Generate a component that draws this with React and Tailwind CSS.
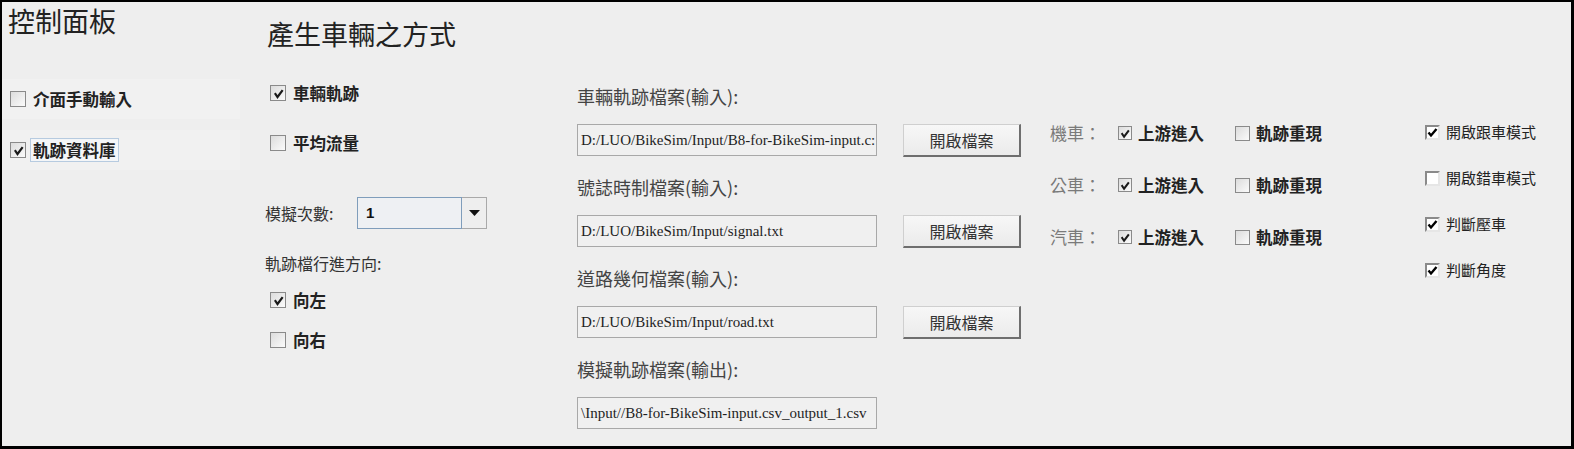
import React from "react";

const CJK = "font-['Noto_Sans_CJK_TC','Noto_Sans_CJK_SC',sans-serif]";

function CheckA({ checked, size = "w-[15px] h-[15px]" }) {
  return (
    <span className={"inline-flex shrink-0 items-center justify-center border border-[#8a8a8a] bg-gradient-to-br from-[#dcdcdc] to-[#fbfbfb] " + size}>
      {checked && (
        <svg width="13" height="13" viewBox="0 0 13 13">
          <path d="M3.5 7 L5.5 10 L10 4" fill="none" stroke="#1a1a1a" strokeWidth="2.2" strokeLinecap="square" />
        </svg>
      )}
    </span>
  );
}

function CheckB({ checked }) {
  return (
    <span className="inline-flex w-[15px] h-[15px] shrink-0 items-center justify-center border-2 border-t-[#8a8a8a] border-l-[#8a8a8a] border-r-[#e6e6e6] border-b-[#e6e6e6] bg-white">
      {checked && (
        <svg width="11" height="11" viewBox="0 0 11 11">
          <path d="M1.5 5.5 L4 8.5 L9.5 2" fill="none" stroke="#000" strokeWidth="2.4" />
        </svg>
      )}
    </span>
  );
}

function BoldItem({ checked, label, focus }) {
  return (
    <div className="flex items-center h-[24px]">
      <CheckA checked={checked} size="w-[16px] h-[16px]" />
      <span
        className={
          "ml-[4px] text-[16.5px] font-bold text-[#222] leading-[22px] px-[2px] " +
          (focus ? "border border-[#b7cbe0] bg-[#f4f6f8]" : "border border-transparent")
        }
      >
        {label}
      </span>
    </div>
  );
}

function FileSection({ label, value, button, first }) {
  return (
    <div className={first ? "flex flex-col" : "flex flex-col mt-[19px]"}>
      <div className="h-[24px] leading-[24px] text-[18px] text-[#444]">{label}</div>
      <div className="flex items-center mt-[16px] h-[32px]">
        <div className="w-[300px] h-[32px] border border-[#a8a8a8] bg-[#f0f0f0] flex items-center pl-[3px] overflow-hidden whitespace-nowrap font-['Liberation_Serif',serif] text-[15px] text-[#1e1e1e]">
          {value}
        </div>
        {button && (
          <div className="ml-[26px] w-[118px] h-[33px] flex items-center justify-center bg-gradient-to-b from-[#f7f7f7] to-[#ebebeb] border border-[#cfcfcf] border-r-2 border-b-2 border-r-[#6e6e6e] border-b-[#6e6e6e] text-[16px] text-[#333]">
            開啟檔案
          </div>
        )}
      </div>
    </div>
  );
}

function VehicleRow({ name, first }) {
  return (
    <div className={"flex items-center h-[28px] " + (first ? "" : "mt-[24px]")}>
      <span className="w-[68px] text-[17px] text-[#7a7a7a]">{name}：</span>
      <div className="w-[117px] flex items-center">
        <CheckA checked size="w-[14px] h-[14px]" />
        <span className="ml-[6px] text-[16.5px] font-bold text-[#222]">上游進入</span>
      </div>
      <div className="flex items-center">
        <CheckA checked={false} size="w-[15px] h-[15px]" />
        <span className="ml-[6px] text-[16.5px] font-bold text-[#222]">軌跡重現</span>
      </div>
    </div>
  );
}

function ModeRow({ checked, label, first }) {
  return (
    <div className={"flex items-center h-[24px] " + (first ? "" : "mt-[22px]")}>
      <CheckB checked={checked} />
      <span className="ml-[6px] text-[15px] text-[#222]">{label}</span>
    </div>
  );
}

export default function App() {
  return (
    <div className={"w-[1574px] h-[449px] bg-[#eeeeee] border-solid border-black border-t-2 border-l-2 border-r-[3px] border-b-[3px] flex " + CJK}>
      {/* Left control panel */}
      <div className="w-[238px] h-full flex flex-col">
        <div className="h-[38px] leading-[38px] text-[27px] text-[#222] pl-[6px]">控制面板</div>
        <div className="mt-[39px] h-[40px] flex items-center pl-[8px] bg-[#f1f1f1]">
          <BoldItem checked={false} label="介面手動輸入" />
        </div>
        <div className="mt-[11px] h-[40px] flex items-center pl-[8px] bg-[#f1f1f1]">
          <BoldItem checked label="軌跡資料庫" focus />
        </div>
      </div>

      {/* Vehicle generation */}
      <div className="w-[310px] h-full flex flex-col">
        <div className="mt-[13px] h-[38px] leading-[38px] text-[27px] text-[#222] pl-[27px]">產生車輛之方式</div>
        <div className="mt-[28px] pl-[30px]">
          <BoldItem checked label="車輛軌跡" />
        </div>
        <div className="mt-[26px] pl-[30px]">
          <BoldItem checked={false} label="平均流量" />
        </div>
        <div className="mt-[42px] pl-[25px] flex items-center h-[32px]">
          <span className="w-[92px] text-[16px] text-[#333]">模擬次數:</span>
          <div className="flex h-[32px] w-[130px]">
            <div className="flex-1 border border-[#7f9dbb] bg-[#eef0f3] flex items-center pl-[8px] font-['Liberation_Sans',sans-serif] font-bold text-[15px] text-[#111]">
              1
            </div>
            <div className="w-[25px] border border-l-0 border-[#a9a9a9] bg-[#eeeeee] flex items-center justify-center">
              <svg width="11" height="6" viewBox="0 0 11 6">
                <path d="M0 0 L11 0 L5.5 6 Z" fill="#111" />
              </svg>
            </div>
          </div>
        </div>
        <div className="mt-[22px] pl-[25px] h-[24px] leading-[24px] text-[16px] text-[#333]">軌跡檔行進方向:</div>
        <div className="mt-[13px] pl-[30px]">
          <BoldItem checked label="向左" />
        </div>
        <div className="mt-[16px] pl-[30px]">
          <BoldItem checked={false} label="向右" />
        </div>
      </div>

      {/* Files */}
      <div className="w-[480px] h-full flex flex-col pl-[27px] pt-[82px]">
        <FileSection first label="車輛軌跡檔案(輸入):" value="D:/LUO/BikeSim/Input/B8-for-BikeSim-input.c:" button />
        <FileSection label="號誌時制檔案(輸入):" value="D:/LUO/BikeSim/Input/signal.txt" button />
        <FileSection label="道路幾何檔案(輸入):" value="D:/LUO/BikeSim/Input/road.txt" button />
        <FileSection label="模擬軌跡檔案(輸出):" value="\Input//B8-for-BikeSim-input.csv_output_1.csv" />
      </div>

      {/* Vehicle types */}
      <div className="w-[380px] h-full flex flex-col pl-[20px] pt-[117px]">
        <VehicleRow first name="機車" />
        <VehicleRow name="公車" />
        <VehicleRow name="汽車" />
      </div>

      {/* Modes */}
      <div className="flex-1 h-full flex flex-col pl-[15px] pt-[118px]">
        <ModeRow first checked label="開啟跟車模式" />
        <ModeRow checked={false} label="開啟錯車模式" />
        <ModeRow checked label="判斷壓車" />
        <ModeRow checked label="判斷角度" />
      </div>
    </div>
  );
}
